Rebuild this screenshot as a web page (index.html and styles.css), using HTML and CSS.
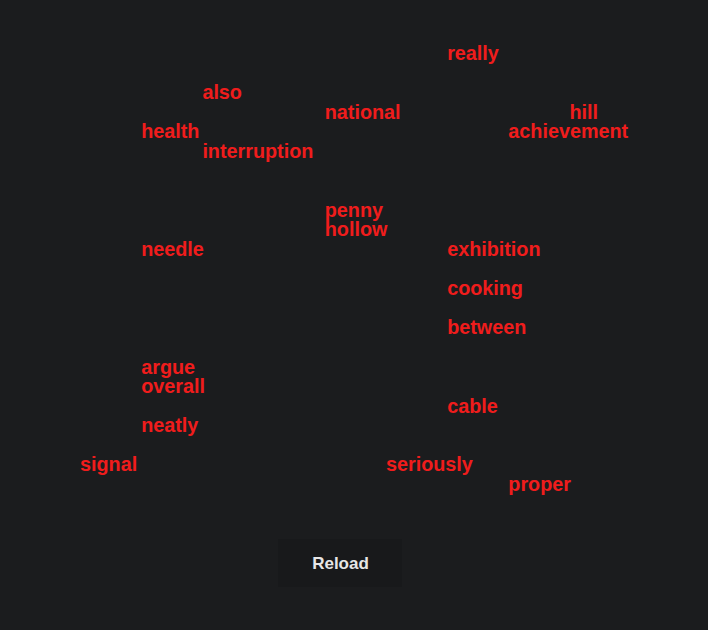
FILE: index.html
```html
<!DOCTYPE html>
<html>
<head>
<meta charset="utf-8">
<link rel="stylesheet" href="styles.css">
</head>
<body>
<main class="page">
  <div class="cloud">
    <span class="word" style="grid-column:7;grid-row:1">really</span>
    <span class="word" style="grid-column:3;grid-row:3">also</span>
    <span class="word" style="grid-column:5;grid-row:4">national</span>
    <span class="word" style="grid-column:9;grid-row:4">hill</span>
    <span class="word" style="grid-column:2;grid-row:5">health</span>
    <span class="word" style="grid-column:8;grid-row:5">achievement</span>
    <span class="word" style="grid-column:3;grid-row:6">interruption</span>
    <span class="word" style="grid-column:5;grid-row:9">penny</span>
    <span class="word" style="grid-column:5;grid-row:10">hollow</span>
    <span class="word" style="grid-column:2;grid-row:11">needle</span>
    <span class="word" style="grid-column:7;grid-row:11">exhibition</span>
    <span class="word" style="grid-column:7;grid-row:13">cooking</span>
    <span class="word" style="grid-column:7;grid-row:15">between</span>
    <span class="word" style="grid-column:2;grid-row:17">argue</span>
    <span class="word" style="grid-column:2;grid-row:18">overall</span>
    <span class="word" style="grid-column:7;grid-row:19">cable</span>
    <span class="word" style="grid-column:2;grid-row:20">neatly</span>
    <span class="word" style="grid-column:1;grid-row:22">signal</span>
    <span class="word" style="grid-column:6;grid-row:22">seriously</span>
    <span class="word" style="grid-column:8;grid-row:23">proper</span>
  </div>
  <div class="actions">
    <button class="reload" type="button">Reload</button>
  </div>
</main>
</body>
</html>
```

FILE: styles.css
```css
html, body {
  margin: 0;
  padding: 0;
  background: #1b1c1e;
  height: 100%;
}
.page {
  padding-top: 44px;
  font-family: "Liberation Sans", Arial, sans-serif;
}
.cloud {
  display: grid;
  grid-template-columns: repeat(9, 61.2px);
  grid-template-rows: repeat(23, 19.6px);
  margin-left: 80px;
}
.word {
  color: #f01c1c;
  font-weight: bold;
  font-size: 19.8px;
  line-height: 19px;
  white-space: nowrap;
}
.actions {
  padding-left: 278px;
  margin-top: 44px;
}
.reload {
  width: 124px;
  height: 48px;
  border: none;
  background: #18191b;
  color: #e6e6e6;
  font-family: "Liberation Sans", Arial, sans-serif;
  font-weight: bold;
  font-size: 17px;
  padding: 2px 0 0 1px;
  margin: 0;
  line-height: 20px;
}
```
